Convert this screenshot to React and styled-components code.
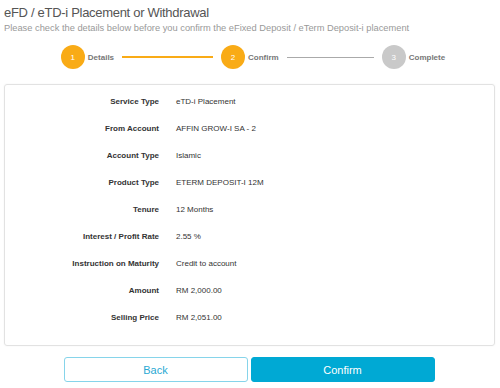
import React from 'react';
import styled, { createGlobalStyle } from 'styled-components';

const GlobalStyle = createGlobalStyle`
  body {
    margin: 0;
    background: #fff;
    font-family: "Liberation Sans", Arial, sans-serif;
  }
`;

const rows = [
  { label: 'Service Type', value: 'eTD-i Placement' },
  { label: 'From Account', value: 'AFFIN GROW-I SA - 2' },
  { label: 'Account Type', value: 'Islamic' },
  { label: 'Product Type', value: 'ETERM DEPOSIT-I 12M' },
  { label: 'Tenure', value: '12 Months' },
  { label: 'Interest / Profit Rate', value: '2.55 %' },
  { label: 'Instruction on Maturity', value: 'Credit to account' },
  { label: 'Amount', value: 'RM 2,000.00' },
  { label: 'Selling Price', value: 'RM 2,051.00' },
];

export default function App() {
  return (
    <Page>
      <GlobalStyle />
      <Title>eFD / eTD-i Placement or Withdrawal</Title>
      <Subtitle>Please check the details below before you confirm the eFixed Deposit / eTerm Deposit-i placement</Subtitle>

      <Stepper>
        <Step>
          <Circle active>1</Circle>
          <StepLabel>Details</StepLabel>
        </Step>
        <Line active width={91} />
        <Step>
          <Circle active>2</Circle>
          <StepLabel>Confirm</StepLabel>
        </Step>
        <Line width={87} />
        <Step>
          <Circle>3</Circle>
          <StepLabel>Complete</StepLabel>
        </Step>
      </Stepper>

      <Card>
        {rows.map(r => (
          <Row key={r.label}>
            <Label>{r.label}</Label>
            <Value>{r.value}</Value>
          </Row>
        ))}
      </Card>

      <Actions>
        <Button>Back</Button>
        <Button primary>Confirm</Button>
      </Actions>
    </Page>
  );
}

//styles

const Page = styled.div`
  width: 500px;
  height: 388px;
  padding: 5px 5px 0 4px;
  box-sizing: border-box;
`;

const Title = styled.h1`
  margin: 0;
  font-size: 13px;
  letter-spacing: -0.3px;
  font-weight: normal;
  color: #555;
  line-height: 16px;
`;

const Subtitle = styled.p`
  margin: 1px 0 0;
  font-size: 9.3px;
  color: #999;
  line-height: 12px;
`;

const Stepper = styled.div`
  display: flex;
  align-items: center;
  justify-content: center;
  height: 24px;
  margin: 11px 0 0 7px;
`;

const Step = styled.div`
  display: flex;
  align-items: center;
  gap: 3px;
`;

const Circle = styled.div`
  width: 24px;
  height: 24px;
  border-radius: 50%;
  background: ${p => (p.active ? '#f9ab16' : '#c9c9c9')};
  color: #fff;
  font-size: 8px;
  display: flex;
  align-items: center;
  justify-content: center;
`;

const StepLabel = styled.span`
  font-size: 8px;
  font-weight: bold;
  color: #777;
`;

const Line = styled.div`
  width: ${p => p.width}px;
  height: ${p => (p.active ? '1.5px' : '1px')};
  background: ${p => (p.active ? '#f9ab16' : '#aaa')};
  margin: 0 8px;
`;

const Card = styled.div`
  margin-top: 15px;
  width: 491px;
  height: 262px;
  box-sizing: border-box;
  border: 1px solid #e2e2e2;
  border-radius: 3px;
  box-shadow: 0 0 2px rgba(0, 0, 0, 0.06);
  padding-top: 3px;
  display: flex;
  flex-direction: column;
`;

const Row = styled.div`
  display: grid;
  grid-template-columns: 154px 1fr;
  column-gap: 17px;
  height: 27px;
  align-items: center;
  font-size: 8px;
  color: #333;
`;

const Label = styled.div`
  text-align: right;
  font-weight: bold;
`;

const Value = styled.div``;

const Actions = styled.div`
  display: flex;
  justify-content: center;
  gap: 3px;
  margin-top: 11px;
  padding-right: 1px;
`;

const Button = styled.button`
  width: 184px;
  height: 25px;
  border-radius: 3px;
  font-family: "Liberation Sans", Arial, sans-serif;
  font-size: 11px;
  border: 1px solid ${p => (p.primary ? '#00a9d4' : '#86d4ea')};
  background: ${p => (p.primary ? '#00a9d4' : '#fff')};
  color: ${p => (p.primary ? '#fff' : '#2aa9d3')};
  cursor: pointer;
`;
